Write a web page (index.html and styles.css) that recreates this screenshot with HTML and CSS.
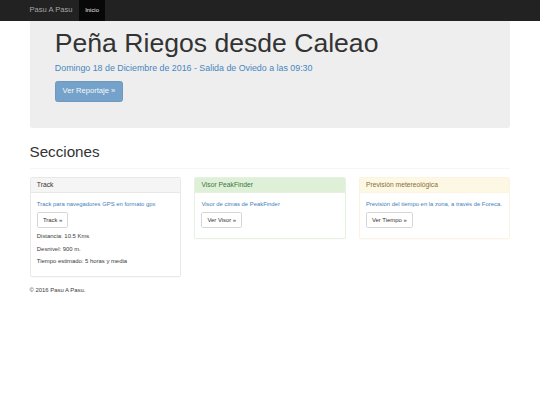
FILE: index.html
```html
<!DOCTYPE html>
<html lang="es">
<head>
<meta charset="utf-8">
<title>Pasu A Pasu</title>
<link rel="stylesheet" href="styles.css">
</head>
<body>
<nav class="navbar">
  <div class="container navbar-inner">
    <a class="brand" href="#">Pasu A Pasu</a>
    <ul class="nav">
      <li class="active"><a href="#">Inicio</a></li>
    </ul>
  </div>
</nav>
<div class="container">
  <div class="jumbotron">
    <h1>Peña Riegos desde Caleao</h1>
    <p class="lead">Domingo 18 de Diciembre de 2016 - Salida de Oviedo a las 09:30</p>
    <p class="btn-row"><a class="btn btn-primary btn-lg disabled" href="#">Ver Reportaje &raquo;</a></p>
  </div>
  <div class="page-header">
    <h1>Secciones</h1>
  </div>
  <div class="row">
    <div class="panel panel-default">
      <div class="panel-heading">Track</div>
      <div class="panel-body">
        <p class="text-primary">Track para navegadores GPS en formato gpx</p>
        <p class="btn-row"><a class="btn btn-default" href="#">Track &raquo;</a></p>
        <p>Distancia: 10.5 Kms</p>
        <p>Desnivel: 900 m.</p>
        <p>Tiempo estimado: 5 horas y media</p>
      </div>
    </div>
    <div class="panel panel-success">
      <div class="panel-heading">Visor PeakFinder</div>
      <div class="panel-body">
        <p class="text-primary">Visor de cimas de PeakFinder</p>
        <p class="btn-row"><a class="btn btn-default" href="#">Ver Visor &raquo;</a></p>
      </div>
    </div>
    <div class="panel panel-warning">
      <div class="panel-heading">Previsión metereológica</div>
      <div class="panel-body">
        <p class="text-primary">Previsión del tiempo en la zona, a través de Foreca.</p>
        <p class="btn-row"><a class="btn btn-default" href="#">Ver Tiempo &raquo;</a></p>
      </div>
    </div>
  </div>
  <footer class="footer">
    <p>&copy; 2016 Pasu A Pasu.</p>
  </footer>
</div>
</body>
</html>
```

FILE: styles.css
```css
* { box-sizing: border-box; }

html, body {
  margin: 0;
  padding: 0;
  background: #fff;
}

body {
  font-family: "Liberation Sans", Arial, Helvetica, sans-serif;
  font-size: 5.9px;
  line-height: 8.44px;
  color: #3a3a3a;
}

a { text-decoration: none; }

p { margin: 0 0 4.22px; }

.container {
  width: 493.6px;
  margin: 0 auto;
  padding: 0 6.33px;
}

/* Navbar */
.navbar {
  background: #222;
  height: 21px;
}

.navbar-inner {
  display: flex;
  align-items: stretch;
  height: 21px;
}

.brand {
  display: flex;
  align-items: center;
  margin-left: -6.33px;
  padding: 0 6.33px;
  font-size: 7.59px;
  line-height: 8.44px;
  color: #a5a5a5;
}

.nav {
  display: flex;
  margin: 0;
  padding: 0;
  list-style: none;
}

.nav li { display: flex; }

.nav a {
  display: flex;
  align-items: center;
  padding: 0 6.33px;
  color: #9d9d9d;
}

.nav .active a {
  background: #080808;
  color: #e6e6e6;
}

/* Jumbotron */
.jumbotron {
  background: #eee;
  border-radius: 0 0 2.53px 2.53px;
  padding: 7.7px 25.3px 20.25px;
}

.jumbotron h1 {
  margin: 0 0 4.22px;
  font-size: 26.58px;
  line-height: 29.24px;
  font-weight: 400;
  color: #333;
}

.jumbotron .lead {
  margin: 0 0 6.33px;
  font-size: 8.86px;
  line-height: 12.66px;
  color: #4886bf;
}

.jumbotron .btn-row { margin: 0 0 6.33px; }

.btn-row { display: flex; }

.btn {
  display: inline-block;
  border: 1px solid transparent;
  white-space: nowrap;
}

.btn-default {
  padding: 2.53px 5.06px;
  font-size: 5.9px;
  line-height: 8.44px;
  color: #333;
  background: #fff;
  border-color: #d6d6d6;
  border-radius: 1.7px;
}

.btn-lg {
  padding: 4.22px 6.75px;
  font-size: 7.59px;
  line-height: 10.13px;
  border-radius: 2.53px;
}

.btn-primary {
  color: #fff;
  background: #337ab7;
  border-color: #2e6da4;
}

.btn.disabled { opacity: .65; }

/* Page header */
.page-header {
  margin: 15.4px 0 8.44px;
  padding-bottom: 3px;
  border-bottom: 1px solid #f6f6f6;
}

.page-header h1 {
  margin: 0 0 4.22px;
  font-size: 15.19px;
  line-height: 16.7px;
  font-weight: 400;
  color: #333;
}

/* Panels */
.row {
  display: grid;
  grid-template-columns: repeat(3, 1fr);
  column-gap: 12.66px;
  align-items: start;
}

.panel {
  margin-bottom: 8.44px;
  background: #fff;
  border: 1px solid #e8e8e8;
  border-radius: 1.7px;
  box-shadow: 0 0.4px 0.4px rgba(0, 0, 0, .03);
}

.panel-heading {
  padding: 4.22px 6.33px;
  font-size: 6.75px;
  line-height: 6px;
  border-bottom: 1px solid #e8e8e8;
  border-radius: 1.3px 1.3px 0 0;
}

.panel-default > .panel-heading {
  background: #f5f5f5;
  color: #333;
}

.panel-success { border-color: #e6f2e0; }
.panel-success > .panel-heading {
  background: #dff0d8;
  color: #3c763d;
  border-bottom-color: #e6f2e0;
}

.panel-warning { border-color: #fcf3e2; }
.panel-warning > .panel-heading {
  background: #fcf8e3;
  color: #8a6d3b;
  border-bottom-color: #fcf3e2;
}

.panel-body { padding: 6.33px; }

.text-primary { color: #3f80ba; }

.footer p { margin: 0; }
```
